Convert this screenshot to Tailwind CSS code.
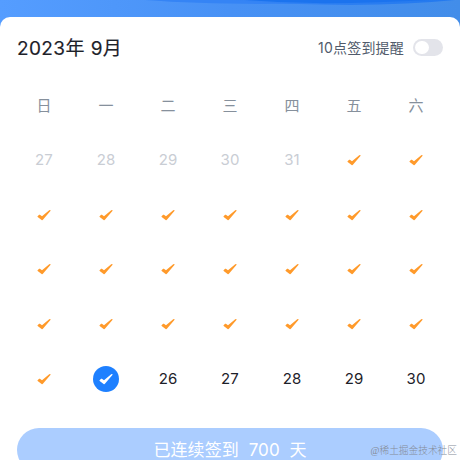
<!DOCTYPE html>
<html lang="zh-CN">
<head>
<meta charset="utf-8">
<title>签到日历</title>
<script src="https://cdn.jsdelivr.net/npm/@tailwindcss/browser@4"></script>
</head>
<body class="w-[460px] h-[460px] overflow-hidden bg-[#4590f0] font-['Inter','Noto_Sans_CJK_SC',sans-serif]">
<svg width="0" height="0" class="absolute"><defs><symbol id="check" viewBox="0 0 14 12"><path fill="currentColor" d="M.6 7.2 L2.1 5.8 Q2.5 5.5 2.9 5.8 L5 7.2 L11.9 1.4 Q12.6.8 13.2 1.1 Q13.9 1.4 13.4 2.1 L5.9 10.8 Q5.3 11.5 4.6 10.9 L.7 8 Q.2 7.6.6 7.2Z"/></symbol></defs></svg>
<div class="relative w-[460px] h-[460px] overflow-hidden flex flex-col">
  <header class="h-[16.5px] shrink-0">
    <svg class="block w-[460px] h-8" viewBox="0 0 460 32">
      <defs>
        <linearGradient id="sky"><stop offset="0" stop-color="#559dff"/><stop offset=".5" stop-color="#4791f5"/><stop offset="1" stop-color="#428de9"/></linearGradient>
        <linearGradient id="arc"><stop offset="0" stop-color="#3584f5"/><stop offset="1" stop-color="#2379ee"/></linearGradient>
      </defs>
      <path fill="url(#sky)" d="M0 0H460V32H0Z"/>
      <path fill="#3584f5" d="M145 0 Q195 3.7 260 3.9 Q320 3.9 370 0Z"/>
      <path fill="url(#arc)" d="M225 0 Q290 4.9 350 4.9 Q410 4.5 455 0Z"/>
      <path fill="#1b73ee" d="M245 0 Q285 3.2 325 3.2 Q375 2.9 430 0Z"/>
    </svg>
  </header>
  <main class="relative h-[443.5px] shrink-0 rounded-t-[10px] bg-white">
    <div class="flex h-[61.5px] items-center justify-between pl-[17px] pr-[17px]">
      <h1 class="pt-[3px] whitespace-nowrap text-[19px] font-normal tracking-[0.4px] text-[#1d2129] [-webkit-text-stroke:0.15px_#1d2129]">2023年 9月</h1>
      <div class="flex items-center gap-[9px]">
        <span class="whitespace-nowrap text-[14px] tracking-[0.2px] text-[#515b6b]">10点签到提醒</span>
        <span class="flex h-[17px] w-[30px] items-center rounded-full bg-[#e3e4ea] pl-[2px]"><span class="size-[13.5px] rounded-full bg-white"></span></span>
      </div>
    </div>
    <div id="calendar" class="grid grid-cols-7 auto-rows-[54.7px] mx-[13px] text-center text-[15px] leading-none"></div>
    <button class="mx-[17px] mt-[21.6px] flex h-[44px] w-[426px] items-center justify-center whitespace-pre rounded-full bg-[#abcdff] pt-[3px] text-[17px] tracking-[0.1px] text-white">已连续签到  700  天</button>
    <div class="absolute right-[3px] bottom-px whitespace-nowrap font-['Liberation_Serif','Noto_Sans_CJK_SC',serif] text-[9.7px] font-light leading-[16px] text-[#858c98]">@稀土掘金技术社区</div>
  </main>
</div>
<script>
const calendar = document.getElementById('calendar');
const check = '<svg class="w-[14px] h-[12px] text-[#ff9a2b]"><use href="#check"/></svg>';
const add = (content, style) => {
  const cell = document.createElement('div');
  cell.className = style;
  cell.innerHTML = content;
  calendar.append(cell);
};
for (const day of '日一二三四五六') add(day, 'flex items-center justify-center text-[#86909c]');
for (let day = 27; day <= 31; day++) add(day, 'flex items-center justify-center pb-px tracking-[0.1px] text-[#c9cdd4]');
for (let day = 1; day <= 24; day++) add(check, 'flex items-center justify-center');
add('<span class="flex size-[26px] items-center justify-center rounded-full bg-[#1e80ff]"><svg class="w-[14px] h-[12px] text-white"><use href="#check"/></svg></span>', 'flex items-center justify-center');
for (let day = 26; day <= 30; day++) add(day, 'flex items-center justify-center tracking-[0.1px] text-[#1d2129]');
</script>
</body>
</html>
